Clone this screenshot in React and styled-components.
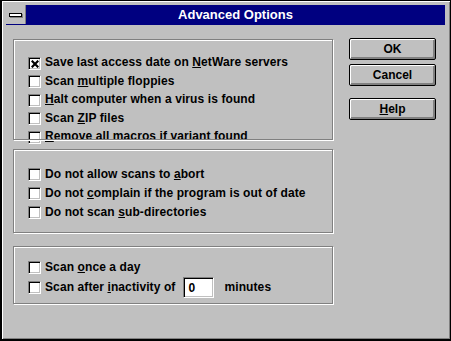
import React from "react";
import styled, { createGlobalStyle } from "styled-components";

const Global = createGlobalStyle`
	html, body {
		margin: 0;
		padding: 0;
		background: #c0c0c0;
	}
	* {
		box-sizing: border-box;
	}
`;

const Window = styled.div`
	width: 451px;
	height: 341px;
	background: #c0c0c0;
	border: 1px solid #000;
	border-left-width: 2px;
	border-bottom-width: 2px;
	box-shadow: inset 1px 1px 0 #fff, inset -1px -1px 0 #808080;
	padding: 4px 5px 0 4px;
	font-family: "Liberation Sans", Arial, sans-serif;
	font-weight: bold;
	font-size: 12px;
	color: #000;
`;

const TitleBar = styled.div`
	display: flex;
	height: 20px;
	border-bottom: 1px solid #000080;
`;

const SysMenu = styled.div`
	width: 20px;
	height: 19px;
	background: #c0c0c0;
	border-right: 1px solid #808080;
	display: flex;
	align-items: center;
	justify-content: center;
	span {
		width: 13px;
		height: 4px;
		border: 1px solid #000;
		background: #fff;
		box-shadow: 1px 1px 0 #808080;
	}
`;

const Title = styled.div`
	flex: 1;
	background: #000080;
	color: #fff;
	font-size: 13px;
	line-height: 19px;
	text-align: center;
`;

const Body = styled.div`
	display: flex;
	padding: 13px 0 0 7px;
	gap: 15px;
`;

const Column = styled.div`
	width: 321px;
	padding-top: 1px;
	display: flex;
	flex-direction: column;
`;

const Group = styled.div`
	position: relative;
	height: ${(p) => p.$h}px;
	margin-top: ${(p) => p.$mt || 0}px;
	padding: ${(p) => p.$pt}px 0 0 15px;
	&::after {
		content: "";
		position: absolute;
		left: 0;
		top: 0;
		right: 1px;
		bottom: 1px;
		border: 1px solid #808080;
		box-shadow: 1px 1px 0 #fff, inset 1px 1px 0 #fff;
		pointer-events: none;
	}
`;

const Row = styled.div`
	display: flex;
	align-items: center;
	height: ${(p) => p.$h || 18}px;
	gap: 4px;
	white-space: nowrap;
	letter-spacing: 0.1px;
`;

const Box = styled.span`
	width: 13px;
	height: 13px;
	flex: none;
	background: #fff;
	border-top: 1px solid #808080;
	border-left: 1px solid #808080;
	border-bottom: 1px solid #fff;
	border-right: 1px solid #fff;
	box-shadow: inset 1px 1px 0 #000, inset -1px -1px 0 #c0c0c0;
	display: flex;
	align-items: center;
	justify-content: center;
	padding: 1px 0 0 1px;
`;

const Label = styled.span`
	line-height: 13px;
	margin-top: -1px;
	u {
		text-underline-offset: 1px;
	}
`;

const Field = styled.input`
	width: 31px;
	height: 21px;
	margin: 0 6px 0 4px;
	padding: 0 0 0 4px;
	background: #fff;
	border-top: 1px solid #808080;
	border-left: 1px solid #808080;
	border-bottom: 1px solid #fff;
	border-right: 1px solid #fff;
	box-shadow: inset 1px 1px 0 #000, inset -1px -1px 0 #c0c0c0;
	font: inherit;
	color: #000;
	outline: none;
`;

const Buttons = styled.div`
	display: flex;
	flex-direction: column;
	gap: 4px;
`;

const Button = styled.button`
	width: 87px;
	height: 22px;
	margin-top: ${(p) => p.$mt || 0}px;
	padding: 0;
	background: #c0c0c0;
	border: 1px solid #000;
	border-radius: 2px;
	box-shadow: inset 1px 1px 0 #fff, inset -1px -1px 0 #808080, inset -2px -2px 0 #808080;
	font: inherit;
	color: #000;
	u {
		text-underline-offset: 1px;
	}
`;

const Check = ({ checked, h, children }) => (
	<Row $h={h}>
		<Box>
			{checked && (
				<svg width="8" height="8" viewBox="0 0 8 8">
					<path d="M0.7 0.7L7.3 7.3M7.3 0.7L0.7 7.3" stroke="#000" strokeWidth="2.2" />
				</svg>
			)}
		</Box>
		<Label>{children}</Label>
	</Row>
);

const App = () => {
	return (
		<Window>
			<Global />
			<TitleBar>
				<SysMenu>
					<span />
				</SysMenu>
				<Title>Advanced Options</Title>
			</TitleBar>
			<Body>
				<Column>
					<Group $h={102} $pt={15}>
						<Check checked h={18.5}>
							Save last access date on <u>N</u>etWare servers
						</Check>
						<Check h={18.5}>
							Scan <u>m</u>ultiple floppies
						</Check>
						<Check h={18.5}>
							<u>H</u>alt computer when a virus is found
						</Check>
						<Check h={18.5}>
							Scan <u>Z</u>IP files
						</Check>
						<Check h={18.5}>
							<u>R</u>emove all macros if variant found
						</Check>
					</Group>
					<Group $h={85} $mt={8} $pt={16}>
						<Check h={19}>
							Do not allow scans to <u>a</u>bort
						</Check>
						<Check h={19}>
							Do not <u>c</u>omplain if the program is out of date
						</Check>
						<Check h={19}>
							Do not scan <u>s</u>ub-directories
						</Check>
					</Group>
					<Group $h={59} $mt={12} $pt={12}>
						<Check h={19}>
							Scan <u>o</u>nce a day
						</Check>
						<Row $h={21}>
							<Box />
							<Label>
								Scan after <u>i</u>nactivity of
							</Label>
							<Field readOnly value="0" />
							<Label>minutes</Label>
						</Row>
					</Group>
				</Column>
				<Buttons>
					<Button>OK</Button>
					<Button>Cancel</Button>
					<Button $mt={8}>
						<u>H</u>elp
					</Button>
				</Buttons>
			</Body>
		</Window>
	);
};

export default App;
